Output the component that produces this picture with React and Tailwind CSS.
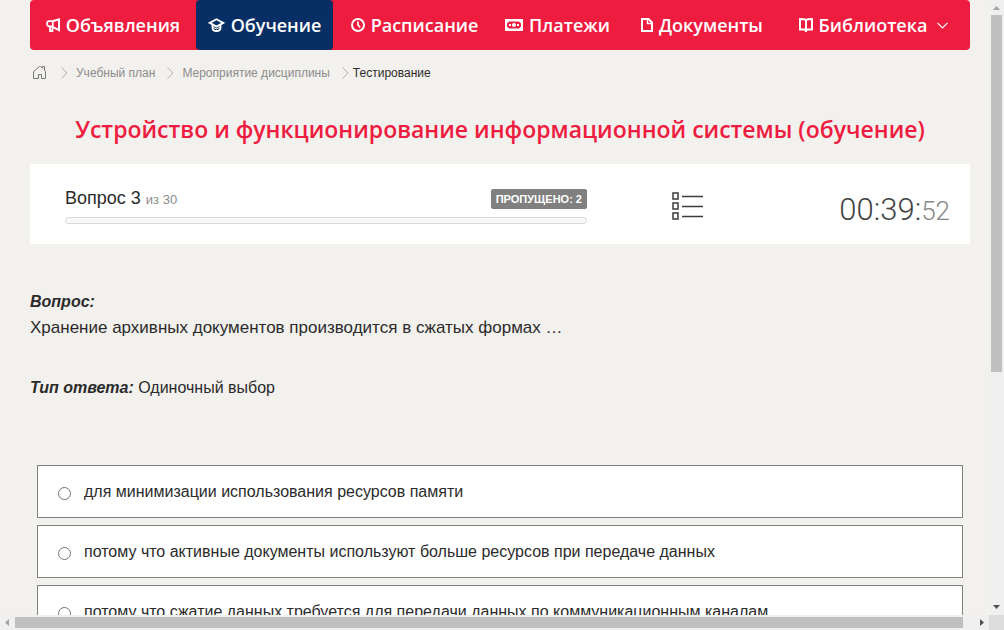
import React, { useState } from "react";

const MegaphoneIcon = () => (
  <svg width="14" height="14" viewBox="0 0 14 14" fill="none" stroke="currentColor" strokeWidth="2">
    <path d="M6.500 3.200 13 1.400v10.800L6.500 8.800" />
    <path d="M6.800 3.200H3A2.300 2.300 0 0 0 1 5.500c0 1.600.900 2.700 2 2.900h3.800z" strokeWidth="1.700" />
    <path d="M4 8.500V13h2.500V9" strokeWidth="1.800" />
  </svg>
);

const CapIcon = () => (
  <svg width="17" height="14" viewBox="0 0 17 14" fill="none" stroke="currentColor" strokeWidth="1.800">
    <path d="M1.800 4.900 8.500 1.200l6.700 3.700-6.700 3.700z" />
    <path d="M4.500 6.500v3.200c0 2 1.700 3.300 4 3.300s4-1.300 4-3.300V6.500" />
    <path d="M4.500 8.800 8.500 11l4-2.200" strokeWidth="1" />
  </svg>
);

const ClockIcon = () => (
  <svg width="14" height="14" viewBox="0 0 14 14" fill="none" stroke="currentColor" strokeWidth="2">
    <circle cx="7" cy="7" r="6" />
    <path d="M7 3.500V7l2.200 2.500" strokeWidth="1.700" />
  </svg>
);

const MoneyIcon = () => (
  <svg width="18" height="12" viewBox="0 0 18 12" fill="currentColor">
    <path fillRule="evenodd" d="M0 0h18v12H0zM4 2.500 2 4.500v3l2 2h10l2-2v-3l-2-2z" />
    <circle cx="9" cy="6" r="2" />
    <path d="M4 5h2v2H4zM12 5h2v2h-2z" />
  </svg>
);

const DocumentIcon = () => (
  <svg width="12" height="14" viewBox="0 0 12 14" fill="none" stroke="currentColor" strokeWidth="2">
    <path d="M1 1h6.500L11 4.500V13H1z" />
    <path d="M6.500 1v4.500H11" strokeWidth="1.500" />
  </svg>
);

const BookIcon = () => (
  <svg width="14" height="14" viewBox="0 0 14 14" fill="none" stroke="currentColor" strokeWidth="2">
    <path d="M7 1.800C5.500 1 3 1 1 1v10.500h4.500L7 12.700l1.500-1.200H13V1c-2 0-4.500 0-6 .8z" />
    <path d="M7 1.500V14" />
  </svg>
);

const HomeIcon = () => (
  <svg width="14" height="14" viewBox="0 0 14 14" fill="none" stroke="#777" strokeWidth="1">
    <path d="M.500 12.500v-7l6-5h1L9.500 2V.500h2V4l1 1.500v7h-4v-4h-3v4z" />
  </svg>
);

const ChevronRight = () => (
  <svg width="7" height="12" viewBox="0 0 7 12" fill="none" stroke="#b3b3b3" strokeWidth="1">
    <path d="M.500.500 6 6l-5.500 5.500" />
  </svg>
);

const ListIcon = () => (
  <svg width="32" height="28" viewBox="0 0 32 28" fill="none" stroke="#3c3c3c" strokeWidth="1.500">
    <path d="M1 1h5v6H1zM1 11h5v6H1zM1 21h5v6H1z" />
    <path d="M10 4.500h21M10 14.500h21M10 24.500h21" strokeWidth="1.300" />
  </svg>
);

const menu = [
  { label: "Объявления", icon: <MegaphoneIcon /> },
  { label: "Обучение", icon: <CapIcon />, active: true },
  { label: "Расписание", icon: <ClockIcon /> },
  { label: "Платежи", icon: <MoneyIcon /> },
  { label: "Документы", icon: <DocumentIcon /> },
  { label: "Библиотека", icon: <BookIcon />, dropdown: true },
];

const answers = [
  "для минимизации использования ресурсов памяти",
  "потому что активные документы используют больше ресурсов при передаче данных",
  "потому что сжатие данных требуется для передачи данных по коммуникационным каналам",
];

const NavBar = () => (
  <nav className="grid h-[50px] shrink-0 grid-cols-[166fr_137fr_163fr_123fr_166fr_185fr] rounded bg-[#ee1c3f] font-['Open_Sans',sans-serif] text-lg font-semibold text-white">
    {menu.map((item) => (
      <a
        key={item.label}
        href="#"
        className={
          item.active
            ? "flex items-center justify-center gap-1.5 rounded bg-[#082f65]"
            : "flex items-center justify-center gap-1.5"
        }
      >
        {item.icon}
        {item.label}
        {item.dropdown && (
          <svg className="mr-2 ml-1" width="11" height="7" viewBox="0 0 11 7" fill="none" stroke="currentColor" strokeWidth="1.200">
            <path d="m.500.800 5 5 5-5" />
          </svg>
        )}
      </a>
    ))}
  </nav>
);

const Breadcrumbs = () => (
  <div className="flex h-[46px] shrink-0 items-center gap-2 pl-[3px] text-xs text-[#8c8c8c]">
    <a href="#" aria-label="Главная" className="mr-1.5">
      <HomeIcon />
    </a>
    <ChevronRight />
    <a href="#" className="mr-1">Учебный план</a>
    <ChevronRight />
    <a href="#" className="mr-1">Мероприятие дисциплины</a>
    <div className="flex items-center gap-1">
      <ChevronRight />
      <span className="text-[#2b2b2b]">Тестирование</span>
    </div>
  </div>
);

const StatusPanel = () => (
  <section className="flex h-20 shrink-0 items-center bg-white pt-1 pr-5 pl-[35px]">
    <div className="w-[522px]">
      <div className="flex items-center justify-between">
        <div className="text-lg leading-5 text-[#2b2b2b]">
          Вопрос 3 <span className="text-[13px] text-[#8c8c8c]">из 30</span>
        </div>
        <span className="rounded-xs bg-[#808080] px-[5px] text-[11px] leading-5 font-bold text-white">
          ПРОПУЩЕНО: 2
        </span>
      </div>
      <div className="mt-[7px] h-[7px] rounded-full border border-[#d9d9d9] bg-[#f8f8f8]" />
    </div>
    <button type="button" aria-label="Список вопросов" className="ml-[85px]">
      <ListIcon />
    </button>
    <div className="ml-auto pt-2 font-['Roboto',sans-serif] text-[31px] leading-10 font-light text-[#444]">
      00:39:<span className="text-[26px] text-[#888]">52</span>
    </div>
  </section>
);

const Answer = ({ text, checked, onChange }) => (
  <label className="flex h-[53px] shrink-0 items-center gap-[13px] border border-[#808080] bg-white pl-5">
    <input type="radio" name="answer" checked={checked} onChange={onChange} className="mt-1 h-[13px] w-[13px]" />
    {text}
  </label>
);

const App = () => {
  const [selected, setSelected] = useState(null);

  return (
    <div className="grid h-screen grid-cols-[minmax(0,1fr)_15px] grid-rows-[minmax(0,1fr)_15px] bg-[#f3f1ee] font-['Liberation_Sans',Arial,sans-serif] text-base text-[#2b2b2b]">
      <main className="flex flex-col overflow-hidden pr-[19px] pl-[30px]">
        <NavBar />
        <Breadcrumbs />
        <h1 className="flex h-[68px] shrink-0 items-center justify-center pb-0.5 font-['Open_Sans',sans-serif] text-[23px] font-semibold whitespace-nowrap text-[#ee1c3f]">
          Устройство и функционирование информационной системы (обучение)
        </h1>
        <StatusPanel />
        <div className="mt-[45px] leading-[26px]">
          <p className="font-bold italic">Вопрос:</p>
          <p className="text-[17px]">Хранение архивных документов производится в сжатых формах …</p>
          <p className="mt-[34px]">
            <b className="italic">Тип ответа:</b> Одиночный выбор
          </p>
        </div>
        <div className="mx-[7px] mt-16 flex flex-col gap-[7px]">
          {answers.map((text, i) => (
            <Answer key={text} text={text} checked={selected === i} onChange={() => setSelected(i)} />
          ))}
        </div>
      </main>

      {/* vertical scrollbar */}
      <div className="flex flex-col items-center bg-[#f0f0f0]">
        <svg width="15" height="15" viewBox="0 0 15 15" fill="#a3a3a3">
          <path d="M4 10h7L7.500 6z" />
        </svg>
        <div className="h-[58%] w-[11px] bg-[#c0c0c0]" />
        <svg className="mt-auto" width="15" height="15" viewBox="0 0 15 15" fill="#505050">
          <path d="M4 5h7L7.500 9z" />
        </svg>
      </div>

      {/* horizontal scrollbar */}
      <div className="flex items-center bg-[#f0f0f0]">
        <svg width="15" height="15" viewBox="0 0 15 15" fill="#a3a3a3">
          <path d="M9 4v7L5 7.500z" />
        </svg>
        <div className="h-[11px] flex-1 bg-[#c0c0c0]" />
        <svg className="ml-[11px]" width="15" height="15" viewBox="0 0 15 15" fill="#505050">
          <path d="M6 4v7l4-3.500z" />
        </svg>
      </div>
      <div className="bg-[#dcdcdc]" />
    </div>
  );
};

export default App;
